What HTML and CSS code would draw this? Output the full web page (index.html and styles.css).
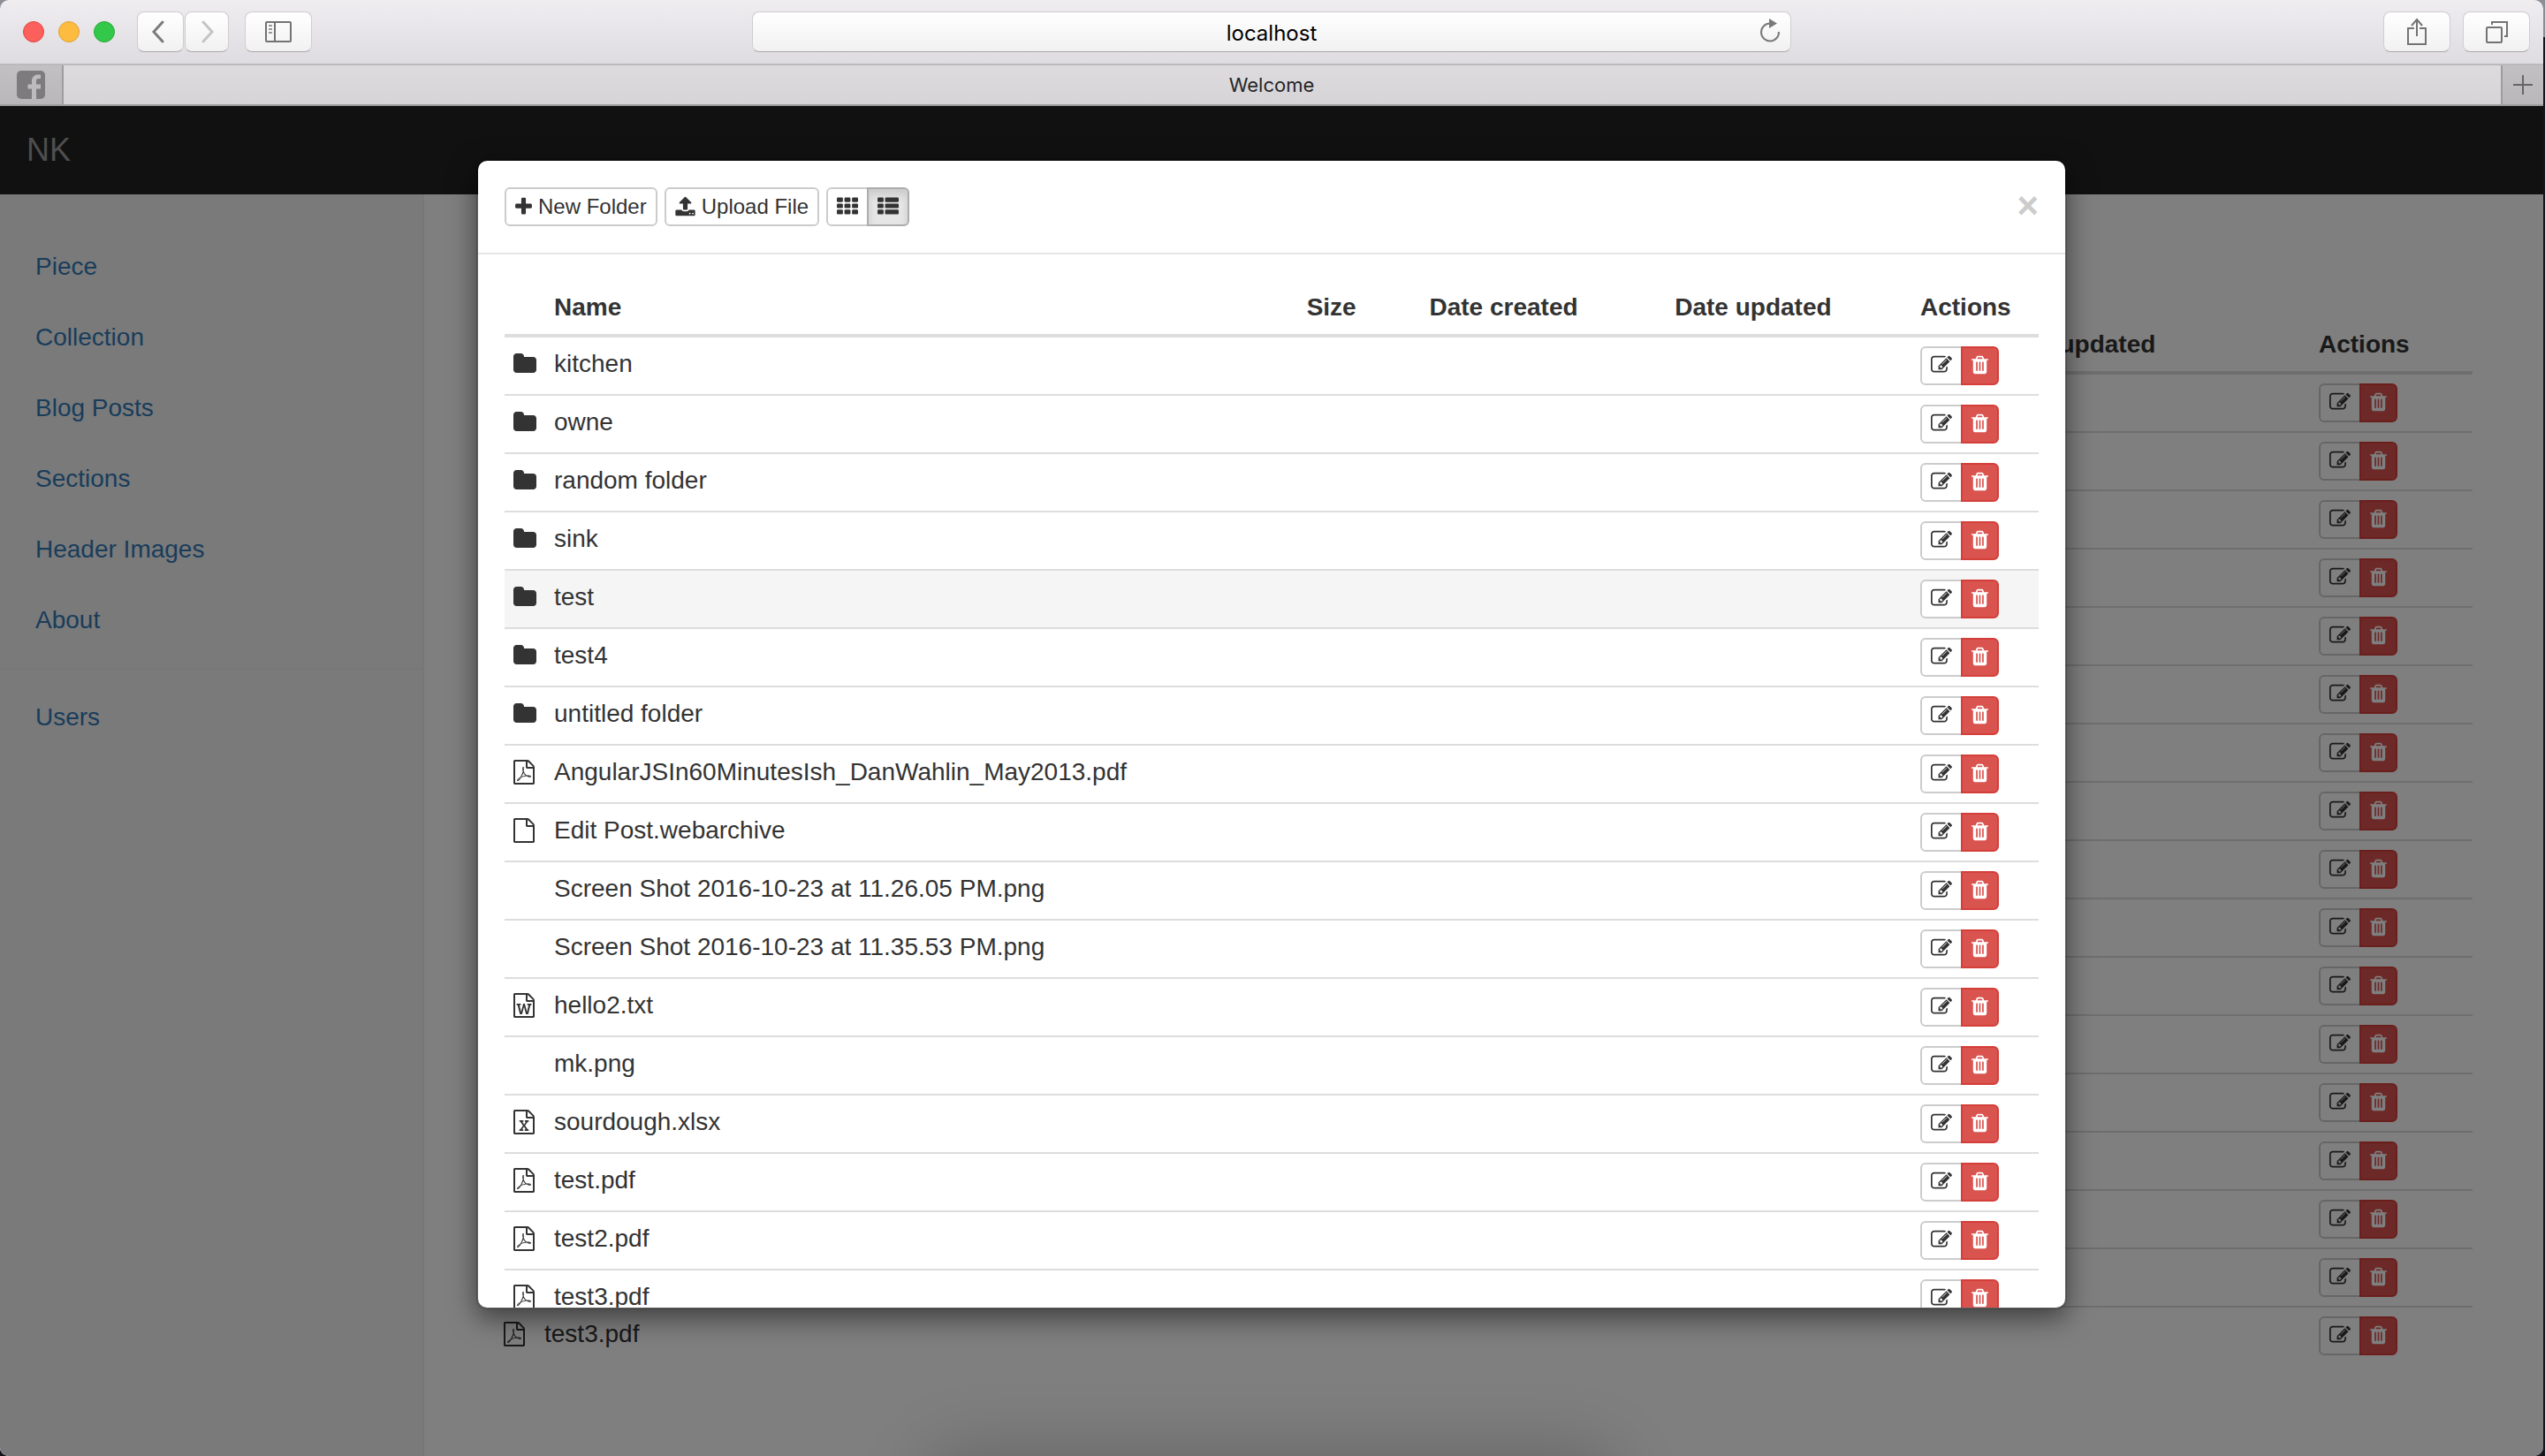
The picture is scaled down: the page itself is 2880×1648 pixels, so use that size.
FILE: index.html
```html
<!DOCTYPE html>
<html lang="en">
<head>
<meta charset="utf-8">
<title>Welcome</title>
<link rel="stylesheet" href="styles.css">
</head>
<body>
<svg class="sprite" aria-hidden="true">
  <symbol id="i-folder" viewBox="64 0 1664 1792"><path d="M1728 608v704q0 92-66 158t-158 66h-1216q-92 0-158-66t-66-158v-960q0-92 66-158t158-66h320q92 0 158 66t66 158v32h672q92 0 158 66t66 158z"/></symbol>
  <symbol id="i-file" viewBox="128 0 1536 1792"><path d="M1596 380q28 28 48 76t20 88v1152q0 40-28 68t-68 28h-1344q-40 0-68-28t-28-68v-1600q0-40 28-68t68-28h896q40 0 88 20t76 48zm-444-244v376h376q-10-29-22-41l-313-313q-12-12-41-22zm384 1528v-1024h-416q-40 0-68-28t-28-68v-416h-768v1536h1280z"/></symbol>
  <symbol id="i-pdf" viewBox="128 0 1536 1792"><path d="M1596 380q28 28 48 76t20 88v1152q0 40-28 68t-68 28h-1344q-40 0-68-28t-28-68v-1600q0-40 28-68t68-28h896q40 0 88 20t76 48zm-444-244v376h376q-10-29-22-41l-313-313q-12-12-41-22zm384 1528v-1024h-416q-40 0-68-28t-28-68v-416h-768v1536h1280zm-514-593q33 26 84 56 59-7 117-7 147 0 177 49 16 22 2 52 0 1-1 2l-2 2v1q-6 38-71 38-48 0-115-20t-130-53q-221 24-392 83-153 262-242 262-15 0-28-7l-24-12q-1-1-6-5-10-10-6-36 9-40 56-91.500t132-96.500q14-9 23 6 2 2 2 4 52-85 107-197 68-136 104-262-24-82-30.500-159.500t6.500-127.500q11-40 42-40h22q23 0 35 15 18 21 9 68-2 6-4 8 1 3 1 8v30q-2 123-14 192 55 164 146 238zm-576 411q52-24 137-158-51 40-87.500 84t-49.500 74zm398-920q-15 42-2 132 1-7 7-44 0-3 7-43 1-4 4-8-1-1-1-2-1-2-1-3-1-22-13-36 0 1-1 2v2zm-124 661q135-54 284-81-2-1-13-9.500t-16-13.500q-76-67-127-176-27 86-83 197-30 56-45 83zm646-16q-24-24-140-24 76 28 124 28 14 0 18-1 0-1-2-3z"/></symbol>
  <symbol id="i-word" viewBox="128 0 1536 1792"><path d="M1596 380q28 28 48 76t20 88v1152q0 40-28 68t-68 28h-1344q-40 0-68-28t-28-68v-1600q0-40 28-68t68-28h896q40 0 88 20t76 48zm-444-244v376h376q-10-29-22-41l-313-313q-12-12-41-22zm384 1528v-1024h-416q-40 0-68-28t-28-68v-416h-768v1536h1280zm-1175-896v107h70l164 661h159l128-485q7-20 10-46 2-16 2-24h4l3 24q1 3 3.500 20t5.500 26l128 485h159l164-661h70v-107h-300v107h90l-99 438q-5 20-7 46l-2 21h-4l-3-21q-1-5-4-21t-5-25l-144-545h-114l-144 545q-2 9-4.500 24.500t-3.500 21.500l-4 21h-4l-2-21q-2-26-7-46l-99-438h90v-107h-300z"/></symbol>
  <symbol id="i-excel" viewBox="128 0 1536 1792"><path d="M1596 380q28 28 48 76t20 88v1152q0 40-28 68t-68 28h-1344q-40 0-68-28t-28-68v-1600q0-40 28-68t68-28h896q40 0 88 20t76 48zm-444-244v376h376q-10-29-22-41l-313-313q-12-12-41-22zm384 1528v-1024h-416q-40 0-68-28t-28-68v-416h-768v1536h1280zM557 1430v106h281v-106h-75l103-161q5-7 10-16.500t7.500-13.500 3.500-4h2q1 4 5 10 2 4 4.500 7.500t6 8 6.500 8.500l107 161h-76v106h291v-106h-68l-192-273 195-282h67v-107h-279v107h74l-103 159q-4 7-10 16.500t-9 13.500l-2 3h-2q-1-4-5-10-6-11-17-23l-106-159h76v-107h-290v107h68l189 272-194 283h-68z"/></symbol>
  <symbol id="i-plus" viewBox="192 0 1408 1792"><path d="M1600 736v192q0 40-28 68t-68 28h-416v416q0 40-28 68t-68 28h-192q-40 0-68-28t-28-68v-416h-416q-40 0-68-28t-28-68v-192q0-40 28-68t68-28h416v-416q0-40 28-68t68-28h192q40 0 68 28t28 68v416h416q40 0 68 28t28 68z"/></symbol>
  <symbol id="i-upload" viewBox="64 0 1664 1792"><path d="M1344 1472q0-26-19-45t-45-19-45 19-19 45 19 45 45 19 45-19 19-45zm256 0q0-26-19-45t-45-19-45 19-19 45 19 45 45 19 45-19 19-45zm128-224v320q0 40-28 68t-68 28h-1472q-40 0-68-28t-28-68v-320q0-40 28-68t68-28h427q21 56 70.500 92t110.500 36h256q61 0 110.500-36t70.500-92h427q40 0 68 28t28 68zm-325-648q-17 40-59 40h-256v448q0 26-19 45t-45 19h-256q-26 0-45-19t-19-45v-448h-256q-42 0-59-40-17-39 14-69l448-448q18-19 45-19t45 19l448 448q31 30 14 69z"/></symbol>
  <symbol id="i-edit" viewBox="0 0 1792 1792"><path d="M888 1184l116-116-152-152-116 116v56h96v96h56zm440-720q-16-16-33 1l-350 350q-17 17-1 33t33-1l350-350q17-17 1-33zm80 594v190q0 119-84.500 203.500t-203.500 84.500h-832q-119 0-203.500-84.500t-84.500-203.500v-832q0-119 84.500-203.500t203.500-84.500h832q63 0 117 25 15 7 18 23 3 17-9 29l-49 49q-14 14-32 8-23-6-45-6h-832q-66 0-113 47t-47 113v832q0 66 47 113t113 47h832q66 0 113-47t47-113v-126q0-13 9-22l64-64q15-15 35-7t20 29zm-96-738l288 288-672 672h-288v-288zm444 132l-92 92-288-288 92-92q28-28 68-28t68 28l152 152q28 28 28 68t-28 68z"/></symbol>
  <symbol id="i-trash" viewBox="192 0 1408 1792"><path d="M704 1376v-704q0-14-9-23t-23-9h-64q-14 0-23 9t-9 23v704q0 14 9 23t23 9h64q14 0 23-9t9-23zm256 0v-704q0-14-9-23t-23-9h-64q-14 0-23 9t-9 23v704q0 14 9 23t23 9h64q14 0 23-9t9-23zm256 0v-704q0-14-9-23t-23-9h-64q-14 0-23 9t-9 23v704q0 14 9 23t23 9h64q14 0 23-9t9-23zm-544-992h448l-48-117q-7-9-17-11h-317q-10 2-17 11zm928 32v64q0 14-9 23t-23 9h-96v948q0 83-47 143.500t-113 60.500h-832q-66 0-113-58.500t-47-141.500v-952h-96q-14 0-23-9t-9-23v-64q0-14 9-23t23-9h309l70-167q15-37 54-63t79-26h320q40 0 79 26t54 63l70 167h309q14 0 23 9t9 23z"/></symbol>
</svg>

<div class="window">
  <header class="titlebar">
    <div class="titlebar-left">
      <div class="lights">
        <button class="light light-close" aria-label="Close window"></button>
        <button class="light light-min" aria-label="Minimise window"></button>
        <button class="light light-max" aria-label="Zoom window"></button>
      </div>
      <div class="history">
        <button class="chrome-btn chrome-btn-back" aria-label="Back"><svg width="18" height="28" viewBox="0 0 18 28"><path d="M14 3L4 14l10 11" fill="none" stroke="#7b7b7b" stroke-width="3" stroke-linecap="round"/></svg></button>
        <button class="chrome-btn chrome-btn-forward" aria-label="Forward"><svg width="18" height="28" viewBox="0 0 18 28"><path d="M4 3l10 11L4 25" fill="none" stroke="#c4c4c4" stroke-width="3" stroke-linecap="round"/></svg></button>
      </div>
      <button class="chrome-btn chrome-btn-side" aria-label="Show sidebar"><svg width="30" height="24" viewBox="0 0 30 24" fill="none" stroke="#737373" stroke-width="2"><rect x="1" y="1" width="28" height="22" rx="1"/><path d="M11 1v22"/><path d="M4 5h4M4 9h4M4 13h4" stroke="#999"/></svg></button>
    </div>
    <div class="address">
      <input class="address-input" type="text" value="localhost" aria-label="Address">
      <button class="reload" aria-label="Reload"><svg width="24" height="28" viewBox="0 0 24 28"><path d="M12 5.500A10 10 0 1 0 22 15" fill="none" stroke="#7a7a7a" stroke-width="2"/><path d="M11 0l9 5.500-9 5.500z" fill="#7a7a7a"/></svg></button>
    </div>
    <div class="titlebar-right">
      <button class="chrome-btn" aria-label="Share"><svg width="24" height="32" viewBox="0 0 24 32" fill="none" stroke="#737373" stroke-width="2"><path d="M9 12H2v18h20V12h-7M12 21V3M6 9l6-7 6 7"/></svg></button>
      <button class="chrome-btn" aria-label="Show all tabs"><svg width="26" height="32" viewBox="0 0 26 32" fill="none" stroke="#737373" stroke-width="2"><rect x="2" y="11" width="17" height="17" rx="1"/><path d="M8 8V5h17v16h-3"/></svg></button>
    </div>
  </header>
  <nav class="tabbar" aria-label="Tabs">
    <button class="tab-pinned" aria-label="Facebook"><svg width="32" height="32" viewBox="0 0 32 32"><rect width="32" height="32" rx="5" fill="#7d7b7e"/><path d="M17 32V20.500h-4.500v-5H17V12c0-5 3-7.500 7-7.500h3V9h-2.500C22.500 9 22 10 22 12v3.500h5v5h-5V32z" fill="#bdbbbe"/></svg></button>
    <div class="tab-active">Welcome</div>
    <button class="tab-new" aria-label="New tab"><svg width="22" height="22" viewBox="0 0 22 22"><path d="M11 0v22M0 11h22" stroke="#666" stroke-width="2"/></svg></button>
  </nav>

  <div class="page">
    <div class="navbar"><a class="brand" href="#">NK</a></div>
    <div class="layout">
      <aside class="sidebar">
        <nav class="side-nav">
          <a href="#">Piece</a>
          <a href="#">Collection</a>
          <a href="#">Blog Posts</a>
          <a href="#">Sections</a>
          <a href="#">Header Images</a>
          <a href="#">About</a>
        </nav>
        <hr class="side-rule">
        <nav class="side-nav"><a href="#">Users</a></nav>
      </aside>
      <main class="main">
        <table class="files files-page">
          <thead><tr><th class="col-icon"></th><th>Name</th><th class="col-size">Size</th><th class="col-created">Date created</th><th class="col-updated">Date updated</th><th class="col-actions">Actions</th></tr></thead>
          <tbody data-files></tbody>
        </table>
      </main>
    </div>

    <div class="backdrop">
      <section class="modal" role="dialog" aria-label="Files">
        <div class="modal-header">
          <div class="toolbar">
            <button class="btn"><svg class="icon icon-plus"><use href="#i-plus"/></svg>New Folder</button>
            <button class="btn"><svg class="icon icon-upload"><use href="#i-upload"/></svg>Upload File</button>
            <div class="btn-group">
              <button class="btn" aria-label="Grid view"><svg class="icon icon-edit" viewBox="0 0 1792 1792"><rect y="192" width="512" height="384" rx="96"/><rect x="640" y="192" width="512" height="384" rx="96"/><rect x="1280" y="192" width="512" height="384" rx="96"/><rect y="704" width="512" height="384" rx="96"/><rect x="640" y="704" width="512" height="384" rx="96"/><rect x="1280" y="704" width="512" height="384" rx="96"/><rect y="1216" width="512" height="384" rx="96"/><rect x="640" y="1216" width="512" height="384" rx="96"/><rect x="1280" y="1216" width="512" height="384" rx="96"/></svg></button>
              <button class="btn is-active" aria-label="List view" aria-pressed="true"><svg class="icon icon-edit" viewBox="0 0 1792 1792"><rect y="192" width="512" height="384" rx="96"/><rect x="640" y="192" width="1152" height="384" rx="96"/><rect y="704" width="512" height="384" rx="96"/><rect x="640" y="704" width="1152" height="384" rx="96"/><rect y="1216" width="512" height="384" rx="96"/><rect x="640" y="1216" width="1152" height="384" rx="96"/></svg></button>
            </div>
          </div>
          <button class="close" aria-label="Close">×</button>
        </div>
        <div class="modal-body">
          <table class="files">
            <thead><tr><th class="col-icon"></th><th>Name</th><th class="col-size">Size</th><th class="col-created">Date created</th><th class="col-updated">Date updated</th><th class="col-actions">Actions</th></tr></thead>
            <tbody data-files data-highlight="test"></tbody>
          </table>
        </div>
      </section>
    </div>
  </div>
</div>
<script src="files.js"></script>
</body>
</html>
```
FILE: styles.css
```css
* { box-sizing: border-box; }

html, body { height: 100%; }

body {
  margin: 0;
  padding-right: 2px;
  background: linear-gradient(#8b8f96 42px, #14151b 42px);
  color: #333;
  font: 28px/40px "Liberation Sans", Arial, sans-serif;
}

button { margin: 0; font: inherit; color: inherit; }
svg { display: block; flex: none; }
.sprite { display: none; }

.window {
  display: flex;
  flex-direction: column;
  height: 100%;
  border-radius: 10px;
  overflow: hidden;
}

/* Browser chrome */
.titlebar {
  flex: none;
  display: grid;
  grid-template-columns: 1fr 41.3% 1fr;
  align-items: center;
  height: 74px;
  padding: 0 15px;
  background: linear-gradient(#efedf0, #dedce0);
  border-bottom: 2px solid #bbb9bc;
}
.titlebar-left { display: flex; align-items: center; padding-left: 11px; }
.titlebar-right { display: flex; justify-content: flex-end; gap: 14px; }
.lights { display: flex; gap: 16px; margin-right: 25px; }
.light { width: 24px; height: 24px; padding: 0; border: 1px solid; border-radius: 50%; }
.light-close { background: #fc605c; border-color: #e2443f; }
.light-min { background: #fdbc40; border-color: #dfa034; }
.light-max { background: #34c84a; border-color: #27a937; }

.chrome-btn {
  display: flex;
  align-items: center;
  justify-content: center;
  width: 76px;
  height: 46px;
  padding: 0;
  border: 1px solid #cfcdd0;
  border-bottom-color: #a9a8aa;
  border-radius: 8px;
  background: linear-gradient(#fff, #f1f1f1);
}
.history { display: flex; gap: 1px; margin-right: 18px; }
.chrome-btn-back { width: 53px; padding-right: 6px; }
.chrome-btn-forward { width: 50px; padding-left: 2px; }

.address { position: relative; }
.address-input {
  display: block;
  width: 100%;
  height: 46px;
  padding: 2px 48px 0;
  border: 1px solid #cfcdd0;
  border-bottom-color: #a9a8aa;
  border-radius: 8px;
  background: linear-gradient(#fff, #f1f1f1);
  color: #000;
  font: 24px/28px Inter, sans-serif;
  text-align: center;
}
.reload { position: absolute; top: 8px; right: 12px; padding: 0; border: 0; background: none; }

.tabbar {
  flex: none;
  display: flex;
  height: 46px;
  border-bottom: 2px solid #9d9c9e;
  background: linear-gradient(#dddbde, #d6d4d7);
}
.tab-pinned, .tab-new {
  display: flex;
  align-items: center;
  justify-content: center;
  padding: 0;
  border: 0 solid #9d9c9e;
  background: linear-gradient(#c2c0c3, #b9b7ba);
}
.tab-pinned { width: 72px; border-right-width: 2px; }
.tab-new { width: 48px; border-left-width: 2px; }
.tab-active {
  flex: 1;
  padding-right: 24px;
  color: #262527;
  font: 22px/44px Inter, sans-serif;
  text-align: center;
}

/* Site */
.page {
  position: relative;
  flex: 1;
  min-height: 0;
  display: flex;
  flex-direction: column;
  background: #fff;
  overflow: hidden;
}
/* soft shade rising from the bottom edge of the screen */
.page::after {
  content: "";
  position: absolute;
  top: 100%;
  left: 37%;
  width: 26%;
  height: 80px;
  border-radius: 20px;
  box-shadow: 0 10px 80px 16px rgba(0, 0, 0, .2);
}
.navbar { flex: none; height: 100px; padding: 30px; background: #222; }
.brand { color: #9d9d9d; font-size: 36px; text-decoration: none; }
.layout { flex: 1; min-height: 0; display: flex; }
.sidebar {
  flex: none;
  width: 480px;
  padding-top: 42px;
  border-right: 2px solid #eee;
  background: #f5f5f5;
}
.side-nav { display: flex; flex-direction: column; }
.side-nav a { padding: 20px 40px; color: #337ab7; text-decoration: none; }
.side-rule { margin: 14px 0; border: 0; border-top: 2px solid #eee; }
.main { flex: 1; padding: 140px 80px 0; }

/* File listing */
.files { width: 100%; border-spacing: 0; table-layout: fixed; }
.files th, .files td { padding: 10px; text-align: left; vertical-align: top; }
.files th { border-bottom: 4px solid #ddd; }
.files tr + tr td { border-top: 2px solid #ddd; }
.col-icon { width: 46px; }
.col-size { width: 8%; }
.col-created, .col-updated { width: 16%; }
.col-actions { width: 144px; }
.files-page .col-updated { width: 362px; }
.files-page .col-actions { width: 184px; }
.is-highlighted { background: #f5f5f5; }

.icon { height: 24px; fill: currentColor; }
.icon-plus, .icon-trash { width: 19px; }
.icon-upload { width: 23px; }
.icon-edit { width: 24px; }
.icon-file { width: 24px; height: 28px; margin-top: 6px; }
.icon-folder { width: 26px; height: 28px; margin-top: 6px; }

.btn {
  display: flex;
  align-items: center;
  gap: 7px;
  height: 44px;
  padding: 0 10px;
  border: 2px solid #ccc;
  border-radius: 6px;
  background: #fff;
  color: #333;
  font-size: 24px;
  line-height: 36px;
}
.btn-danger { background: #d9534f; border-color: #d43f3a; color: #fff; }
.btn.is-active {
  background: #e6e6e6;
  border-color: #adadad;
  box-shadow: inset 0 6px 10px rgba(0, 0, 0, .125);
}
.btn-group { display: flex; }
.btn-group .btn { padding-bottom: 2px; }
.btn-group .btn:first-child { border-top-right-radius: 0; border-bottom-right-radius: 0; }
.btn-group .btn:last-child { margin-left: -2px; border-top-left-radius: 0; border-bottom-left-radius: 0; }

/* Dialog */
.backdrop {
  position: absolute;
  inset: 0;
  padding: 60px 0 166px;
  background: rgba(0, 0, 0, .5);
}
.modal {
  display: flex;
  flex-direction: column;
  max-width: 1800px;
  max-height: 100%;
  margin: 0 auto;
  border: 2px solid rgba(0, 0, 0, .2);
  border-radius: 12px;
  background: #fff;
  background-clip: padding-box;
  box-shadow: 0 10px 30px rgba(0, 0, 0, .5);
  overflow: hidden;
}
.modal-header {
  flex: none;
  display: flex;
  justify-content: space-between;
  align-items: flex-start;
  height: 106px;
  padding: 30px;
  border-bottom: 2px solid #e5e5e5;
}
.toolbar { display: flex; gap: 8px; }
.close {
  padding: 0;
  border: 0;
  background: none;
  color: #ccc;
  font-size: 42px;
  font-weight: bold;
  line-height: 42px;
}
.modal-body { min-height: 0; padding: 30px; overflow-y: auto; scrollbar-width: none; }
```
FILE: files.js
```js
const files = [
  ['folder', 'kitchen'],
  ['folder', 'owne'],
  ['folder', 'random folder'],
  ['folder', 'sink'],
  ['folder', 'test'],
  ['folder', 'test4'],
  ['folder', 'untitled folder'],
  ['pdf', 'AngularJSIn60MinutesIsh_DanWahlin_May2013.pdf'],
  ['file', 'Edit Post.webarchive'],
  ['', 'Screen Shot 2016-10-23 at 11.26.05 PM.png'],
  ['', 'Screen Shot 2016-10-23 at 11.35.53 PM.png'],
  ['word', 'hello2.txt'],
  ['', 'mk.png'],
  ['excel', 'sourdough.xlsx'],
  ['pdf', 'test.pdf'],
  ['pdf', 'test2.pdf'],
  ['pdf', 'test3.pdf']
];

function fileIcon(type) {
  if (!type) return '';
  const size = type === 'folder' ? 'icon-folder' : 'icon-file';
  return `<svg class="icon ${size}"><use href="#i-${type}"/></svg>`;
}

function fileRow([type, name], highlight) {
  return `<tr${name === highlight ? ' class="is-highlighted"' : ''}>
    <td>${fileIcon(type)}</td><td>${name}</td><td></td><td></td><td></td>
    <td><div class="btn-group">
      <button class="btn" aria-label="Rename ${name}"><svg class="icon icon-edit"><use href="#i-edit"/></svg></button>
      <button class="btn btn-danger" aria-label="Delete ${name}"><svg class="icon icon-trash"><use href="#i-trash"/></svg></button>
    </div></td></tr>`;
}

document.querySelectorAll('[data-files]').forEach(body => {
  body.innerHTML = files.map(f => fileRow(f, body.dataset.highlight)).join('');
});
```
